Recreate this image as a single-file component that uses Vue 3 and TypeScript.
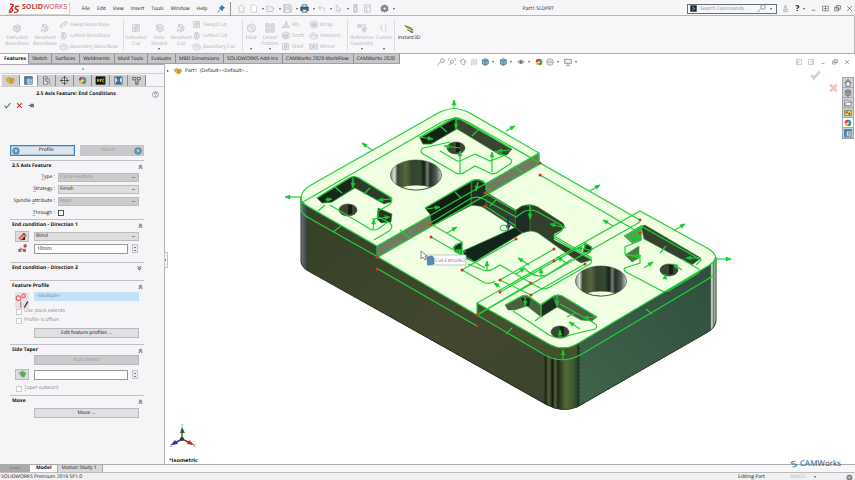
<script setup lang="ts">
import { h, ref } from 'vue'

type Shape = [d: string, fill?: string, stroke?: string]

const G = '#c3c5c9'
const shapes: Record<string, Shape[]> = {
  boss: [['M2 4L7 2L10 4V9L6 11L2 9Z', '#e3e4e7', G], ['M2 4L6 6L10 4M6 6V11', 'none', G]],
  revolve: [['M3 2C8 1 11 5 9 9L6 11L4 9C7 7 6 5 3 5Z', '#e0e1e4', G], ['M2 7V11M1 9H4', 'none', G]],
  sweep: [['M2 10C1 5 4 6 6 4S9 1 11 3S8 6 7 8', '#e3e4e7', G], ['M1 8L5 11', 'none', G]],
  loft: [['M3 10L4 2H8L10 7L7 11Z', '#e3e4e7', G], ['M5 2L7 11', 'none', G]],
  bound: [['M1 5L5 2L11 5V9L6 11L2 9Z', '#eeeff1', G], ['M3 6C6 4 8 8 10 6', 'none', G]],
  cut: [['M2 2H10V10H2Z', '#eff0f2', G], ['M4 5L8 3V7L5 9Z', '#d5d6da', G]],
  hole: [['M3 3L7 1L11 4V9L7 11L3 8Z', '#e6e7ea', G], ['M2 2L7 8M5 4A2 2 0 1 0 9 5', 'none', G]],
  fillet: [['M2 3L6 1L11 3V9L6 11L2 9Z', '#ececef', G], ['M3 4C7 3 8 5 8 9', 'none', G]],
  pattern: [['M1 1H5V5H1ZM7 1H11V5H7ZM1 7H5V11H1ZM7 7H11V11H7Z', '#e0e1e4', G]],
  rib: [['M1 10H11L7 2L5 6Z', '#dcdde0', G]],
  wrap: [['M2 3C5 1 9 1 11 3V9C8 11 4 11 2 9Z', '#e8e9ec', G], ['M4 5H9V8H4Z', '#d2d3d7', G]],
  mirror: [['M1 2L5 4V8L1 10ZM11 2L7 4V8L11 10Z', '#e3e4e7', G], ['M6 1V11', 'none', G]],
  refgeo: [['M1 2H5V5H1ZM6 7L11 5V9L8 11Z', '#dcdde0', G], ['M5 3L10 2L8 7', 'none', G]],
  curves: [['M2 2C4 3 1 8 4 10M9 1C6 4 11 7 7 10', 'none', G]],
  instant: [['M1 3L9 6L11 9L3 5Z', '#d8cc28', '#6e6b22'], ['M4 8L10 11M8 11H11', 'none', '#333']],
  home: [['M1 6L6 1L11 6M3 5V11H9V5', 'none', '#b9bcc1']],
  page: [['M3 1H7L10 4V11H3Z', '#fff', '#c2c5ca']],
  open: [['M1 3H5L6 4H9V6H11L9 10H1Z', '#eee', '#b9bcc1']],
  save: [['M1 1H10L11 2V11H1Z', '#dfe0e4', '#b9bcc1'], ['M3 1H8V4H3ZM3 7H9V11H3Z', '#fafafa', '#b9bcc1']],
  print: [['M3 1H9V5H3Z', '#fff', '#34566a'], ['M1 4H11V9H1Z', '#3c6b86', '#28495c'], ['M3 7H9V11H3Z', '#dfeaf1', '#34566a']],
  undo: [['M2 5H8C11 5 11 10 8 10M5 2L2 5L5 8', 'none', '#babdc3']],
  select: [['M3 1V10L5 8L7 11L8 10L7 7H9Z', '#f6f6f6', '#babdc3']],
  traffic: [['M4 1H8V11H4Z', '#d0d2d6', '#aaadb2'], ['M5 3H7M5 6H7M5 9H7', 'none', '#fff']],
  sheet: [['M2 1H10V11H2ZM2 4H10M5 4V11', '#f2f2f2', '#c0c3c8']],
  gear: [['M6 1L7 3L9 2L9 4L11 5L10 6L11 8L9 8L9 10L7 9L6 11L5 9L3 10L3 8L1 8L2 6L1 5L3 4L3 2L5 3Z', '#a5a8ad', '#55585d'], ['M6 4A2 2 0 1 0 6 8A2 2 0 1 0 6 4', '#fff', '#55585d']],
  pin: [['M6 2L10 5L8 6L7 9L3 5L5 5ZM4 7L1 11', '#2c86bb', '#1d6c9b']],
  searchbox: [['M1 1H11V11H1Z', '#1d2b36', '#1d2b36'], ['M4 3L8 6L4 9', 'none', '#fff']],
  lens: [['M8 1A3 3 0 1 0 8 7A3 3 0 1 0 8 1M5 6L1 11', '#f6fafc', '#6b8493']],
  lensfit: [['M3 1H1V4M9 1H11V4M11 9V11', 'none', '#8a9299'], ['M6 3A2.5 2.5 0 1 0 6 8A2.5 2.5 0 1 0 6 3M4 8L2 11', '#eef4f7', '#6b8493']],
  prev: [['M8 2A4 4 0 1 0 9 9M2 5L5 2M8 4H11M8 4V7H11', 'none', '#6b8493']],
  section: [['M2 3L5 1V9L2 11ZM7 3L10 1V9L7 11Z', '#eceef0', '#c2c6ca']],
  cube: [['M2 3L6 1L11 3V9L6 11L2 9Z', '#83b2cf', '#416b87'], ['M2 3L6 5L11 3M6 5V11', 'none', '#416b87']],
  eye: [['M1 6C4 2 8 2 11 6C8 9 4 9 1 6Z', '#eef1f3', '#7d858c'], ['M6 4A2 2 0 1 0 6 8A2 2 0 1 0 6 4', '#718593', '#5a6770']],
  ball: [['M6 1A5 5 0 0 0 1 6H6Z', '#d8392f'], ['M6 1A5 5 0 0 1 11 6H6Z', '#3a8dc4'], ['M1 6A5 5 0 0 0 6 11V6Z', '#f1b82d'], ['M11 6A5 5 0 0 1 6 11V6Z', '#3f9945'], ['M6 4A2 2 0 1 0 6 8A2 2 0 1 0 6 4', '#fff8']],
  scene: [['M6 1A5 5 0 1 0 6 11A5 5 0 1 0 6 1', '#dfe7ec', '#8b949b'], ['M1 7C4 5 8 5 11 7', 'none', '#8b949b']],
  monitor: [['M1 2H11V8H1Z', '#eef3f6', '#5b7484'], ['M6 8V10M3 11H9', 'none', '#5b7484']],
  part: [['M1 4L4 2L7 4L10 3L11 7L8 10L4 9L1 6Z', '#efbd3d', '#ae7a18'], ['M4 5L7 6L8 9M7 4V6', 'none', '#8f671b']],
  prop: [['M1 1H11V11H1Z', '#e9f3f9', '#376f91'], ['M1 1H11V3H1ZM1 3H4V11H1Z', '#5d9bc1', '#376f91'], ['M6 5H10M6 7H10M6 9H10', 'none', '#376f91']],
  config: [['M2 1H7V11H2ZM3 3H6M3 5H6M3 7H6', '#f3f3f3', '#666'], ['M6 5A2 2 0 1 0 10 6A2 2 0 1 0 6 5M9 8L11 11', '#ddd', '#666']],
  target: [['M6 2A4 4 0 1 0 6 10A4 4 0 1 0 6 2', '#f2f2f2', '#333'], ['M6 0V12M0 6H12', 'none', '#333']],
  npc: [['M0 1H12V11H0Z', '#15150f', '#15150f'], ['M2 8V4L4 7V4M6 8V4H7V6H6M11 4H9V8H11', 'none', '#d9cf35']],
  camtree: [['M1 1H11V11H1Z', '#dfe9f1', '#375c7b'], ['M3 2H9L7 5V8H9V10H3V8H5V5Z', '#4e7899', '#2d4e69']],
  camtool: [['M1 2H5V5H1ZM7 2H11V5H7Z', '#e8e2cb', '#444'], ['M3 5L5 7V11H8V7L9 5', '#b6babd', '#444']],
  help: [['M6 1A5 5 0 1 0 6 11A5 5 0 1 0 6 1', '#f4f8fb', '#4b7086'], ['M4 5C4 2 8 3 8 5C8 6 6 6 6 8M6 9V10', 'none', '#335a72']],
  check: [['M1 6L4 10L11 2', 'none', '#3c9a28']],
  cross: [['M2 2L10 10M10 2L2 10', 'none', '#d0392c']],
  pushpin: [['M1 6H5M5 3V9M5 4H9V8H5M9 3V9', '#999', '#666']],
  blue: [['M6 1A5 5 0 1 0 6 11A5 5 0 1 0 6 1', '#6ea5cc', '#36688b'], ['M4 3H8V8H4Z', '#c7dfee', '#4b80a5']],
  reverse: [['M1 8L8 2L11 5L4 11Z', '#ee8d86', '#b7332b'], ['M4 6L9 2M9 2H6M9 2V5', 'none', '#c92d25'], ['M6 10H9V7Z', '#111', '#111']],
  depth: [['M2 9L5 6M8 5L10 2M3 5L9 9', 'none', '#9c5a5a'], ['M1 7H4V10H1ZM8 1H11V4H8ZM7 7H10V10H7Z', '#d66', '#a54444']],
  profile: [['M1 4A2 2 0 1 0 5 4A2 2 0 1 0 1 4M6 2A1.5 1.5 0 1 0 9 2A1.5 1.5 0 1 0 6 2', '#fbe6e8', '#e0626a'], ['M5 7V12', 'none', '#e0626a'], ['M8 12L11 7', 'none', '#222']],
  taper: [['M1 4L6 1L11 4L8 10L5 9Z', '#68b45c', '#8bbd80'], ['M6 2V8L10 4', 'none', '#469c3f']],
  person: [['M6 1A2 2 0 1 0 6 5A2 2 0 1 0 6 1M3 11V7H9V11Z', '#eee', '#8b8e92']],
  min: [['M3 9H9', 'none', '#333']],
  split: [['M1 2H11V10H1ZM6 2V10M3 6H9', 'none', '#555']],
  restore: [['M4 1H11V7H4ZM1 4H8V10H1Z', '#f6f6f8', '#444']],
  close: [['M2 2L10 10M10 2L2 10', 'none', '#333']],
  paneL: [['M1 1H11V11H1ZM3 1V11M7 4L5 6L7 8', 'none', '#8a8d91']],
  paneR: [['M1 1H11V11H1ZM9 1V11M5 4L7 6L5 8', 'none', '#8a8d91']],
  house: [['M1 6L6 1L11 6', 'none', '#222'], ['M3 6V11H9V6L6 3Z', '#e9f0f4', '#345b73']],
  library: [['M2 3L6 1L10 3V9L6 11L2 9Z', '#aeb2b6', '#555'], ['M2 3L6 5L10 3M6 5V11', 'none', '#555']],
  folder: [['M1 2H5L6 3H10V10H1Z', '#fff', '#666'], ['M1 10L3 5H12L10 10Z', '#f5f5f5', '#666']],
  palette: [['M1 2H11V10H1Z', '#e3d060', '#776b22'], ['M3 4H5V6H3ZM7 6H9V8H7Z', '#8e7d22', '#776b22']],
  camlogo: [['M10 2C6 0 1 2 1 5C4 7 7 4 11 6C9 4 5 4 3 5C4 3 7 2 10 2Z', '#6f7b85'], ['M2 10C6 12 11 10 11 7C8 5 5 8 1 6C3 8 7 8 9 7C8 9 5 10 2 10Z', '#3d83b8']],
}

const Icon = (p: { name: string }) =>
  h('svg', { viewBox: '0 0 12 12', 'aria-hidden': 'true' },
    (shapes[p.name] ?? []).map(([d, fill, stroke]) => h('path', { d, fill: fill ?? 'none', stroke: stroke ?? 'none' })))
Icon.props = ['name']

const menus = ['File', 'Edit', 'View', 'Insert', 'Tools', 'Window', 'Help']
const quick = [
  { i: 'home', drop: false }, { i: 'page', drop: true }, { i: 'open', drop: true }, { i: 'save', drop: true },
  { i: 'print', drop: true }, { i: 'undo', drop: true }, { i: 'select', drop: true }, { i: 'traffic', drop: false },
  { i: 'sheet', drop: false }, { i: 'gear', drop: true },
]

interface Big { icon: string; a: string; b?: string; drop?: boolean; size: string }
interface List { size: string; rows: [string, string][] }
interface Group { big: Big[]; lists: List[] }
const ribbon: Group[] = [
  { big: [{ icon: 'boss', a: 'Extruded', b: 'Boss/Base', size: 'w28' }, { icon: 'revolve', a: 'Revolved', b: 'Boss/Base', size: 'w28' }],
    lists: [{ size: 'l62', rows: [['sweep', 'Swept Boss/Base'], ['loft', 'Lofted Boss/Base'], ['bound', 'Boundary Boss/Base']] }] },
  { big: [{ icon: 'cut', a: 'Extruded', b: 'Cut', size: 'w24' }, { icon: 'hole', a: 'Hole', b: 'Wizard', drop: true, size: 'w22' }, { icon: 'revolve', a: 'Revolved', b: 'Cut', size: 'w22' }],
    lists: [{ size: 'l48', rows: [['cut', 'Swept Cut'], ['loft', 'Lofted Cut'], ['bound', 'Boundary Cut']] }] },
  { big: [{ icon: 'fillet', a: 'Fillet', drop: true, size: 'w16' }, { icon: 'pattern', a: 'Linear', b: 'Pattern', drop: true, size: 'w22' }],
    lists: [{ size: 'l28', rows: [['rib', 'Rib'], ['wrap', 'Draft'], ['cut', 'Shell']] }, { size: 'l36', rows: [['wrap', 'Wrap'], ['bound', 'Intersect'], ['mirror', 'Mirror']] }] },
  { big: [{ icon: 'refgeo', a: 'Reference', b: 'Geometry', drop: true, size: 'w28' }, { icon: 'curves', a: 'Curves', drop: true, size: 'w16' }], lists: [] },
]
const tabs = ['Features', 'Sketch', 'Surfaces', 'Weldments', 'Mold Tools', 'Evaluate', 'MBD Dimensions', 'SOLIDWORKS Add-Ins', 'CAMWorks 2020-WorkFlow', 'CAMWorks 2020']
const panelTabs = ['part', 'prop', 'config', 'target', 'ball', 'npc', 'camtree', 'camtool']
const hud = [
  { i: 'lens', drop: false }, { i: 'lensfit', drop: false }, { i: 'prev', drop: false }, { i: 'section', drop: false },
  { i: 'cube', drop: true }, { i: 'cube', drop: true }, { i: 'eye', drop: true }, { i: 'ball', drop: false }, { i: 'scene', drop: true }, { i: 'monitor', drop: true },
]
const taskPane = ['house', 'library', 'folder', 'palette', 'ball', 'prop']

const active = ref('Features')
const depthValue = ref('10mm')

// Open contour end points
const dots: [number, number][] = [
  [540, 163], [540, 175], [485, 193], [485, 206], [431, 224], [431, 237], [377, 257], [377, 269], [477, 315], [477, 326],
  [462, 270], [500, 280], [500, 292], [531, 283], [531, 295], [516, 239], [554, 249], [554, 261], [585, 264], [640, 220], [640, 233],
]
// Side-of-contour markers: tail then head
const arrows: [number, number, number, number][] = [
  [301, 197, 285, 197], [454, 108, 454, 100], [372, 150, 362, 143], [506, 131, 515, 126], [590, 191, 600, 185], [675, 230, 685, 224],
  [716, 259, 731, 259], [613, 226, 603, 220], [447, 233, 457, 227], [566, 228, 550, 224], [460, 148, 444, 146], [418, 137, 433, 139],
  [460, 173, 460, 151], [492, 172, 492, 152], [510, 150, 497, 151], [456, 118, 456, 129], [478, 182, 476, 191], [426, 209, 440, 207],
  [530, 204, 530, 219], [487, 271, 487, 261], [541, 277, 541, 268], [529, 265, 518, 258], [500, 287, 494, 283], [568, 264, 557, 257],
  [516, 274, 525, 268], [325, 200, 332, 199], [353, 178, 353, 188], [373, 230, 374, 219], [372, 219, 390, 217], [392, 199, 378, 200],
  [466, 252, 456, 250], [525, 297, 525, 306], [557, 296, 557, 306], [580, 329, 569, 322], [596, 317, 583, 318], [560, 338, 560, 330],
  [563, 360, 563, 350], [644, 268, 653, 262], [682, 270, 673, 264], [665, 279, 665, 274], [700, 258, 686, 258], [641, 236, 632, 239],
  [626, 255, 641, 256], [590, 250, 577, 248],
]
const head = ([x1, y1, x2, y2]: [number, number, number, number]) => {
  const len = Math.hypot(x2 - x1, y2 - y1) || 1
  const ux = (x2 - x1) / len
  const uy = (y2 - y1) / len
  const bx = x2 - ux * 5
  const by = y2 - uy * 5
  return `M${x2} ${y2}L${bx - uy * 2} ${by + ux * 2}L${bx + uy * 2} ${by - ux * 2}Z`
}
</script>

<template>
  <div class="app">
    <header class="titlebar">
      <a class="brand" href="#" aria-label="SOLIDWORKS">
        <svg class="ds" viewBox="0 0 12 10" aria-hidden="true">
          <path d="M2 1C6 0 6 3 3 4M1 9C5 9 6 5 3 5L1 9M11 3C7 2 6 5 9 6C11 7 10 9 6 9" />
        </svg>
        <b>SOLID</b><span>WORKS</span>
      </a>
      <nav class="menus"><a v-for="m in menus" :key="m" href="#">{{ m }}</a></nav>
      <button class="ic pinbtn" aria-label="Pin menu"><Icon name="pin" /></button>
      <div class="quick">
        <button v-for="(q, n) in quick" :key="n" class="ic" :class="{ drop: q.drop }" :aria-label="q.i"><Icon :name="q.i" /></button>
      </div>
      <div class="doc">Part1.SLDPRT</div>
      <div class="search">
        <Icon name="searchbox" />
        <input type="text" placeholder="Search Commands" aria-label="Search Commands" />
        <button class="ic drop" aria-label="Search"><Icon name="lens" /></button>
      </div>
      <div class="win">
        <button class="ic" aria-label="Account"><Icon name="person" /></button>
        <button class="ic drop qm" aria-label="Help">?</button>
        <button class="ic" aria-label="Minimize"><Icon name="min" /></button>
        <button class="ic" aria-label="Span displays"><Icon name="split" /></button>
        <button class="ic" aria-label="Restore"><Icon name="restore" /></button>
        <button class="ic" aria-label="Close"><Icon name="close" /></button>
      </div>
    </header>

    <section class="ribbon">
      <div v-for="(g, gi) in ribbon" :key="gi" class="group">
        <button v-for="b in g.big" :key="b.a" class="big" :class="b.size">
          <Icon :name="b.icon" /><span>{{ b.a }}</span><span v-if="b.b">{{ b.b }}</span><i v-if="b.drop" class="caret"></i>
        </button>
        <div v-for="l in g.lists" :key="l.rows[0][1]" class="list" :class="l.size">
          <button v-for="r in l.rows" :key="r[1]"><Icon :name="r[0]" />{{ r[1] }}</button>
        </div>
      </div>
      <button class="big live w28"><Icon name="instant" /><span>Instant3D</span></button>
    </section>

    <nav class="tabs">
      <button v-for="t in tabs" :key="t" :class="{ on: t === active }" @click="active = t">{{ t }}</button>
    </nav>

    <main class="work">
      <aside class="panel">
        <div class="grip"></div>
        <div class="ptabs">
          <button v-for="(p, n) in panelTabs" :key="p" :class="{ on: n === 1 }" :aria-label="p"><Icon :name="p" /></button>
        </div>
        <div class="ptitle"><h1>2.5 Axis Feature: End Conditions</h1><button class="ic" aria-label="Help"><Icon name="help" /></button></div>
        <div class="confirm">
          <button class="ic" aria-label="OK"><Icon name="check" /></button>
          <button class="ic" aria-label="Cancel"><Icon name="cross" /></button>
          <button class="ic" aria-label="Keep visible"><Icon name="pushpin" /></button>
        </div>
        <div class="body">
          <div class="modes">
            <button class="mode on"><Icon name="blue" /><span>Profile</span></button>
            <button class="mode end" disabled><span>Island</span><Icon name="blue" /></button>
          </div>

          <section class="sec feature">
            <h2>2.5 Axis Feature<i class="chev"></i></h2>
            <div class="field"><label for="type"><u>T</u>ype :</label><select id="type" disabled><option>Curve Feature</option></select></div>
            <div class="field"><label for="strategy"><u>S</u>trategy :</label><select id="strategy"><option>Finish</option></select></div>
            <div class="field"><label for="spindle">Spindle <u>a</u>ttribute :</label><select id="spindle" disabled><option>Main</option></select></div>
            <div class="field"><label for="through"><u>T</u>hrough :</label><input id="through" type="checkbox" /></div>
          </section>

          <section class="sec dir1">
            <h2>End condition - Direction 1<i class="chev"></i></h2>
            <div class="row"><button class="tool" aria-label="Reverse direction"><Icon name="reverse" /></button><select aria-label="End condition"><option>Blind</option></select></div>
            <div class="row"><span class="tool flat"><Icon name="depth" /></span><input v-model="depthValue" type="text" aria-label="Depth" /><span class="spin"></span></div>
          </section>

          <section class="sec dir2"><h2>End condition - Direction 2<i class="chev down"></i></h2></section>

          <section class="sec prof">
            <h2>Feature Profile<i class="chev"></i></h2>
            <div class="row top"><span class="tool tall"><Icon name="profile" /></span><div class="picked">&lt;Multiple&gt;</div></div>
            <label class="tick"><input type="checkbox" disabled /><span>Use <u>s</u>tock extents</span></label>
            <label class="tick"><input type="checkbox" disabled /><span>Prof<u>i</u>le is offset</span></label>
            <button class="wide">Edit feature profiles ...</button>
          </section>

          <section class="sec taper">
            <h2>Side Taper<i class="chev"></i></h2>
            <button class="wide" disabled>Auto detect</button>
            <div class="row"><button class="tool" aria-label="Taper"><Icon name="taper" /></button><input type="text" aria-label="Taper angle" /><span class="spin"></span></div>
            <label class="tick"><input type="checkbox" disabled /><span><u>T</u>aper outward</span></label>
          </section>

          <section class="sec move">
            <h2>Move<i class="chev"></i></h2>
            <button class="wide">Move ...</button>
          </section>
        </div>
        <button class="handle" aria-label="Collapse panel"></button>
      </aside>

      <section class="view">
        <svg class="model" viewBox="165 64 690 400" preserveAspectRatio="xMidYMid meet" role="img" aria-label="Isometric view of the part">
          <defs>
            <linearGradient id="front" x1="0" y1="0" x2="1" y2="1"><stop offset="0" stop-color="#344027" /><stop offset=".6" stop-color="#42472f" /><stop offset="1" stop-color="#3b432e" /></linearGradient>
            <linearGradient id="side" x1="0" y1="1" x2="1" y2="0"><stop offset="0" stop-color="#406449" /><stop offset="1" stop-color="#304d3d" /></linearGradient>
            <linearGradient id="bore"><stop offset="0" stop-color="#8a9190" /><stop offset=".08" stop-color="#d8dedb" /><stop offset=".14" stop-color="#3a4632" /><stop offset=".3" stop-color="#56693b" /><stop offset=".42" stop-color="#33422b" /><stop offset=".58" stop-color="#344b35" /><stop offset=".66" stop-color="#121c16" /><stop offset=".72" stop-color="#71806f" /><stop offset=".78" stop-color="#222e27" /><stop offset=".9" stop-color="#56605a" /><stop offset="1" stop-color="#cfd6d0" /></linearGradient>
            <linearGradient id="nose"><stop offset="0" stop-color="#182114" /><stop offset=".12" stop-color="#59603c" /><stop offset=".22" stop-color="#11180f" /><stop offset=".3" stop-color="#53623a" /><stop offset=".38" stop-color="#20281a" /><stop offset=".6" stop-color="#536b34" /><stop offset=".85" stop-color="#3d5532" /><stop offset="1" stop-color="#1d3826" /></linearGradient>
            <linearGradient id="edgeL"><stop offset="0" stop-color="#777d88" /><stop offset=".4" stop-color="#505963" /><stop offset="1" stop-color="#303c2a" /></linearGradient>
            <linearGradient id="edgeR"><stop offset="0" stop-color="#1c2c22" /><stop offset=".3" stop-color="#d8e6d5" /><stop offset=".6" stop-color="#637a61" /><stop offset="1" stop-color="#e8f2e4" /></linearGradient>
          </defs>

          <path fill="url(#front)" d="M301 197V262Q302 268 310 272L548 406L552 350L378 245Z" />
          <path fill="url(#edgeL)" d="M301 197V262Q302 267 308 271V205Z" />
          <path fill="url(#side)" d="M575 340L576 408L708 332Q716 327 716 320V257Z" />
          <path fill="url(#edgeR)" d="M710 264V331Q716 327 716 320V257Z" />
          <path fill="url(#nose)" d="M545 342V404Q561 414 579 406V342Z" />
          <path class="rim" d="M301 197V262Q302 268 310 272L548 405Q562 413 577 407L708 332Q716 327 716 320V257" />
          <path class="rim dash" d="M545 349V404M579 347V406" />

          <path class="face" d="M378 257L540 163L640 220L650 245L477 315Z" />
          <path class="face" d="M301 197Q302 190 311 185L440 112Q454 105 468 112L539 153L377 246L309 207Q301 203 301 197Z" />
          <path fill="#707b60" d="M377 246L539 153L540 164L378 257Z" />
          <path class="face" d="M477 303L640 211L707 248Q722 257 708 266L577 344Q563 351 549 344Z" />
          <path fill="#45502f" d="M477 303L549 344Q563 352 577 344V358Q562 362 547 355L477 315Z" />

          <g stroke="#35a33b" stroke-width=".6">
            <path fill="#2d3b28" d="M317 198L349 178Q354 175 359 178L392 198L391 202L384 204L355 188L332 202L322 203Z" />
            <path fill="#172719" d="M317 198L352 177V189L332 202L322 203Z" />
            <path fill="#26351f" d="M378 208L392 214L391 222L381 223L377 219Z" />
            <path fill="#3b4430" d="M420 138L451 120Q456 116 461 120L512 149L507 155H500L457 129L431 144H423Z" />
            <path fill="#142218" d="M420 138L456 118V129L431 144H423Z" />
            <path fill="#333f2c" d="M425 208L472 181Q480 177 486 184V192L516 210L522 206Q530 203 538 207L563 223Q567 228 560 231L554 234V240L592 260L581 263L573 258L538 233Q530 229 522 233L474 262L465 258L463 251L515 228L484 208Q477 203 470 206L432 226L430 214Z" />
            <path fill="#111e16" d="M425 208L471 182V205L432 226L430 214Z" />
            <path fill="#15241a" d="M463 251L516 227L522 233L474 262L465 258Z" />
            <path fill="#212c24" d="M472 181Q480 177 486 184V207L471 205ZM516 210L522 206H530V231L522 233L515 227Z" />
            <path fill="#1c301d" d="M453 247L462 242V255L455 252Z" />
            <path fill="#27351f" d="M585 243L592 247L590 253L583 252Z" />
            <path fill="#4e5e42" d="M505 305L522 296Q527 294 531 298L541 305L552 297Q558 293 564 297L597 317L592 321L581 320L557 307L541 317L527 306L515 310H508Z" />
            <path fill="#1d2c1c" d="M541 304L553 297L557 307L541 317ZM520 297L531 298L530 307L523 305Z" />
            <path fill="#34412d" d="M641 226L645 225L701 258L692 265L644 239Z" />
            <path fill="#4ea651" d="M624 236L641 226V240L632 243Z" />
            <path fill="#4a7a42" d="M625 255L639 246V258L632 262Z" />
          </g>

          <g stroke="#303a2e" stroke-width=".6">
            <ellipse cx="416" cy="175" rx="25.500" ry="15" fill="url(#bore)" />
            <path d="M401 187Q416 193 431 187Q416 183 401 187Z" class="face" />
            <ellipse cx="601" cy="281" rx="25.500" ry="15" fill="url(#bore)" />
            <path d="M586 293Q601 299 616 293Q601 289 586 293Z" class="face" />
            <ellipse v-for="c in [[456, 148], [348, 210], [669, 270], [560, 332]]" :key="c[0]" :cx="c[0]" :cy="c[1]" rx="9" ry="6" fill="#3a4632" />
            <path v-for="c in [[456, 148], [348, 210], [669, 270], [560, 332]]" :key="c[1]" :d="`M${c[0]} ${c[1] - 5}H${c[0] + 4}V${c[1] + 4}H${c[0]}Z`" fill="#141d13" stroke="none" />
          </g>

          <g class="wire">
            <path d="M301 197Q302 190 311 185L440 112Q454 105 468 112L539 153V164" />
            <path d="M539 153L377 246L309 207Q301 203 301 197V210Q302 214 309 218L378 257L540 164" />
            <path d="M303 202L440 123Q454 115 468 122L640 220M540 175L640 233" />
            <path d="M378 257L477 315M378 269L477 326M377 246V257" />
            <path d="M477 315V303L640 211L707 248Q716 253 716 259L716 270Q716 274 708 279L582 354Q563 365 545 355L477 315L640 222" />
            <path d="M477 303L549 344Q563 352 577 344L708 266Q716 261 716 257" />
            <path d="M317 198L349 178Q354 175 359 178L390 197Q394 201 389 205L378 211V217L390 223Q394 227 389 231L374 240M330 205L370 229Q374 231 378 229L388 222" />
            <path d="M333 232L341 226M410 238L400 230M335 187L342 193M370 188L364 194M318 211L325 205" />
            <path d="M420 137L451 119Q456 116 461 119L510 148M450 142L423 148Q419 151 423 154L456 173Q461 175 465 172L475 166L490 173Q494 175 498 172L510 164Q514 161 509 158L495 151M475 154L460 161H457L440 151M475 154L490 161L505 155" />
            <path d="M440 126L447 132M479 129L472 136M522 172L514 166M455 192L461 198M496 200L490 206" />
            <path d="M425 208L471 181Q478 177 486 184V190M429 224L468 200Q477 194 487 201L516 217L523 212Q530 208 538 212L561 225Q565 229 560 232L554 236L592 258" />
            <path d="M431 224L462 242V252Q455 254 454 248Q454 244 460 243M431 237L485 268M462 270L483 282Q489 285 495 281" />
            <path d="M468 264L483 270Q489 272 495 268L500 265L531 283L540 288Q545 290 550 287L590 264Q594 261 589 258L554 238M500 292L585 244" />
            <path d="M462 270L516 239M500 280L554 249M500 280L531 295M531 283L477 315M531 295L585 264M485 193L516 211M485 206L516 226" />
            <path d="M524 268Q532 276 540 276L547 275L572 259M585 255L590 252Q594 248 590 246L585 243V249M506 334L512 328M652 314L646 309" />
            <path d="M513 311L549 335Q560 341 570 335L595 329Q599 326 594 323L560 304M505 305L522 296Q527 294 531 298L541 305V316L535 321M541 305L552 297Q558 293 564 297L597 317M575 313L567 317" />
            <path d="M641 226L701 260L696 265M625 236L641 226V240L625 247V254L640 258V263L625 268Q623 270 626 272L660 290Q665 293 670 290L697 274Q702 271 697 268L682 259M666 246L660 253" />
            <path v-for="(a, n) in arrows" :key="n" :d="`M${a[0]} ${a[1]}L${a[2]} ${a[3]}`" />
          </g>
          <path v-for="(a, n) in arrows" :key="n" class="tip" :d="head(a)" />
          <circle v-for="(d, n) in dots" :key="n" :cx="d[0]" :cy="d[1]" r="1.500" fill="#d8321c" />

          <path d="M508 216V228M506 225L508 229L510 225" stroke="#122a8e" stroke-width="1.500" fill="none" />
          <ellipse cx="504" cy="228" rx="4" ry="3" fill="none" stroke="#29c840" />

          <path d="M421 251V259L423 257L425 260L426 259L425 256H427Z" fill="#fff" stroke="#555" stroke-width=".7" />
          <path d="M427 255H466V265H427Z" fill="#fff" stroke="#a5a9ad" stroke-width=".7" />
          <path d="M427 257L432 256L434 258V264L428 265Z" fill="#4f8fb8" stroke="#32658a" stroke-width=".6" />
          <text x="435" y="262" class="tiptext">Cut-Extrude2</text>

          <g fill="none" stroke-width="1.500">
            <path stroke="#2d7b3a" d="M182 439V429" /><path stroke="#a92d25" d="M182 439L192 444" /><path stroke="#24359c" d="M182 439L173 444" />
          </g>
          <path fill="#23682f" d="M180 433L182 427L185 433Z" /><path fill="#a92d25" d="M194 445L187 444L189 440Z" /><path fill="#24359c" d="M171 445L175 440L178 444Z" />
          <circle cx="182" cy="439" r="2" fill="#30343c" />
          <text x="181" y="427" class="ax" fill="#2d9b3a">Y</text><text x="193" y="447" class="ax" fill="#c4392e">X</text><text x="170" y="447" class="ax" fill="#3344c0">Z</text>
          <text x="169" y="462" class="iso">*Isometric</text>
        </svg>

        <div class="tree"><i class="tri"></i><Icon name="part" /><span>Part1&nbsp; (Default&lt;&lt;Default&gt;...</span></div>
        <div class="hud"><button v-for="(x, n) in hud" :key="n" class="ic" :class="{ drop: x.drop }" :aria-label="x.i"><Icon :name="x.i" /></button></div>
        <div class="docwin">
          <button v-for="w in ['paneL', 'paneR', 'min', 'restore', 'close']" :key="w" class="ic" :aria-label="w"><Icon :name="w" /></button>
        </div>
        <button class="corner yes" aria-label="Accept"><Icon name="check" /></button>
        <button class="corner no" aria-label="Discard"><Icon name="cross" /></button>
        <div class="task"><button v-for="(t, n) in taskPane" :key="t" :class="{ on: n === 4 }" :aria-label="t"><Icon :name="t" /></button></div>
        <div class="cam"><Icon name="camlogo" /><span><b>CAM</b>Works</span></div>
      </section>
    </main>

    <footer>
      <nav class="sheets"><span class="nav">◂ ◂ ▸ ▸</span><button class="on">Model</button><button>Motion Study 1</button></nav>
      <div class="status"><span class="ver">SOLIDWORKS Premium 2019 SP1.0</span><span class="edit">Editing Part</span><span class="unit">MMGS</span><i class="caret"></i><Icon name="gear" /></div>
    </footer>
  </div>
</template>

<style>
body { margin: 0; background: #fff; }
</style>

<style scoped>
.app { min-height: 100vh; display: grid; grid-template-rows: 16px 38px 10px 1fr auto; font: 5px/8px "Open Sans", "Noto Sans", sans-serif; text-rendering: geometricPrecision; color: #111; background: #fff; }
* { box-sizing: border-box; }
button, input, select { font: inherit; color: inherit; text-rendering: inherit; margin: 0; padding: 0; border: 0; background: none; border-radius: 0; appearance: none; }
a { color: inherit; text-decoration: none; }
u { text-decoration-color: #b4b4b8; }
svg { display: block; overflow: visible; flex: none; }
.ic { width: 9px; height: 9px; flex: none; display: flex; align-items: center; justify-content: center; }
.ic svg { width: 9px; height: 9px; }
.drop { position: relative; }
.drop::after, .caret { content: ""; border: 1px solid transparent; border-top: 2px solid #555; width: 0; height: 0; }
.drop::after { position: absolute; right: -6px; top: 4px; }

.titlebar { display: flex; align-items: center; background: #f6f6f8; border-bottom: 1px solid #b5b6ba; padding: 2px 1px 0 6px; }
.brand { display: flex; align-items: center; width: 64px; height: 13px; padding-left: 2px; background: #fff; border-right: 1px solid #d5d5d8; border-bottom: 1px solid #d5d5d8; color: #c9362e; font-size: 7px; flex: none; }
.ds { width: 12px; height: 11px; margin-right: 2px; }
.ds path { fill: none; stroke: #cc2b25; stroke-width: 1.500; }
.menus { display: flex; gap: 7px; padding-left: 12px; flex: none; line-height: 10px; }
.pinbtn { margin: 0 4px 0 10px; }
.quick { display: flex; gap: 8px; padding-left: 6px; border-left: 1px solid #999; height: 14px; align-items: center; }
.quick .ic:first-child { margin-right: -5px; }
.quick .ic:nth-child(8) { margin-right: -5px; }
.doc { flex: 1; text-align: center; line-height: 10px; }
.search { display: flex; align-items: center; width: 90px; height: 10px; border: 1px solid #66707c; background: #f4f6fa; padding: 0 10px 0 2px; gap: 3px; color: #777; }
.search > svg { width: 7px; height: 7px; }
.search input { flex: 1; min-width: 0; height: 8px; }
.search input::placeholder { color: #888; opacity: 1; }
.win { display: flex; gap: 3px; padding-left: 4px; align-items: center; }
.win .ic svg { width: 7px; height: 7px; }
.qm { font-weight: 700; font-size: 8px; margin-right: 4px; }
.qm.drop::after { right: -3px; }

.ribbon { display: flex; background: #f7f6f8; border-bottom: 1px solid #aaa; border-right: 1px solid #bbb; padding: 3px 0 2px 3px; color: #b2b3b8; line-height: 6px; }
.group { display: flex; border-right: 1px solid #dcdce0; padding-right: 2px; }
.big { display: flex; flex-direction: column; align-items: center; padding-top: 4px; position: relative; }
.big svg { width: 10px; height: 10px; margin-bottom: 2px; }
.big .caret { position: absolute; bottom: 0; }
.live { color: #222; }
.list { display: grid; grid-template-rows: repeat(3, 11px); }
.list button { display: flex; align-items: center; gap: 2px; white-space: nowrap; }
.list svg { width: 9px; height: 9px; }
.w16 { width: 16px; } .w22 { width: 22px; } .w24 { width: 24px; } .w28 { width: 28px; }
.l62 { width: 62px; } .l48 { width: 48px; } .l28 { width: 28px; } .l36 { width: 36px; }

.tabs { display: flex; height: 10px; }
.tabs button { padding: 1px 4px 0 3px; background: #c6c6c9; border-right: 1px solid #909094; border-bottom: 1px solid #a2a2a6; white-space: nowrap; line-height: 8px; }
.tabs .on { background: #fff; font-weight: 700; border-bottom-color: #fff; padding-right: 2px; padding-left: 4px; }

.work { display: grid; grid-template-columns: 165px 1fr; min-height: 0; }
.panel { position: relative; background: #f5f5f8; border-right: 1px solid #b3b3b7; border-top: 1px solid #aaaaae; padding-left: 1px; line-height: 7px; }
.grip { height: 9px; border-bottom: 1px solid #c9d3dc; display: flex; align-items: center; justify-content: center; }
.grip::before { content: ""; width: 2px; height: 2px; background: #9bb0c0; }
.ptabs { display: flex; padding: 1px 0 0 1px; border-bottom: 1px solid #ccc; }
.ptabs button { width: 18px; height: 11px; display: flex; align-items: center; justify-content: center; background: #cfcfd2; border-right: 1px solid #8e8e92; }
.ptabs .on { background: #fff; }
.ptabs svg { width: 9px; height: 9px; }
.ptitle { display: flex; align-items: center; padding: 3px 4px 0 0; }
.ptitle h1 { flex: 1; margin: 0; font: inherit; font-weight: 700; text-align: center; }
.ptitle svg { width: 7px; height: 7px; }
.confirm { display: flex; gap: 3px; padding: 2px 2px 0; }
.confirm svg { width: 7px; height: 7px; }
.confirm :deep(path) { stroke-width: 2; }
.body { padding: 35px 20px 0 9px; }
.modes { display: grid; grid-template-columns: 1fr 1fr; gap: 5px; padding-bottom: 4px; }
.mode { display: flex; align-items: center; height: 11px; border: 1px solid #b8b8bc; background: #e3e3e6; padding: 0 1px; }
.mode span { flex: 1; text-align: center; }
.mode svg { width: 8px; height: 8px; }
.mode.on { border-color: #3a86c4; box-shadow: inset 0 0 0 1px #a8cdea; }
.mode:disabled { background: #c9c9cc; color: #999; border-color: #c4c4c8; }
.sec { border-top: 1px solid #c0c0c4; display: flex; flex-direction: column; }
h2 { margin: 0; padding: 1px 2px 0; font: inherit; font-weight: 700; height: 10px; display: flex; justify-content: space-between; align-items: center; }
.chev { width: 4px; height: 5px; position: relative; }
.chev::before, .chev::after { content: ""; position: absolute; left: 1px; width: 2px; height: 2px; border: solid #777; border-width: 1px 0 0 1px; transform: rotate(45deg); }
.chev::before { top: 1px; } .chev::after { top: 3px; }
.chev.down { transform: rotate(180deg); }
.field { display: grid; grid-template-columns: 1fr 81px; gap: 3px; align-items: center; height: 12px; padding-right: 5px; }
.field label { text-align: right; white-space: nowrap; }
select { width: 100%; height: 9px; background: #dededf linear-gradient(#888, #888) no-repeat right 3px center / 3px 1px; border: 1px solid #bcbcc0; padding: 0 1px; line-height: 7px; }
select:disabled { background-color: #cbcbce; color: #8e8e92; opacity: 1; }
input[type="checkbox"] { width: 6px; height: 6px; border: 1px solid #555; background: #fff; }
input[type="checkbox"]:disabled { border-color: #ccc; }
.feature { height: 59px; }
.dir1 { height: 43px; gap: 1px; }
.dir2 { height: 18px; }
.prof { height: 64px; }
.taper { height: 51px; }
.row { display: grid; grid-template-columns: 15px 1fr; column-gap: 4px; align-items: center; padding: 0 5px; height: 11px; }
.row:has(input) { grid-template-columns: 15px 1fr 7px; column-gap: 4px; }
.row input { height: 10px; min-width: 0; background: #fff; border: 1px solid #9a9a9e; padding: 0 2px; }
.tool { width: 14px; height: 11px; background: #dcdcdf; border: 1px solid #bcbcc0; display: flex; align-items: center; justify-content: center; }
.tool svg { width: 9px; height: 9px; }
.flat { background: none; border-color: transparent; }
.tall { height: 17px; background: #e4e2e8; border-color: #e4e2e8; }
.tall svg { width: 14px; height: 15px; }
.spin { width: 6px; height: 9px; border: 1px solid #c6c6ca; background: linear-gradient(#777, #777) center 2px / 2px 1px no-repeat, linear-gradient(#777, #777) center 5px / 2px 1px no-repeat, #ededf0; }
.top { align-items: start; height: 15px; margin-top: 1px; }
.picked { height: 9px; background: #c5e1f7; color: #738ca0; padding: 0 2px; line-height: 9px; }
.tick { display: flex; align-items: center; gap: 2px; height: 9px; padding-left: 6px; color: #888; }
.tick u { text-decoration-color: #ddd; }
.wide { height: 10px; margin: 3px 5px 0 24px; background: #e0e0e3; border: 1px solid #b9b9bd; }
.wide:disabled { background: #cbcbce; color: #999; margin-top: 0; }
.taper .row { margin: 4px 0; }
.move .wide { margin-top: 2px; }
.handle { position: absolute; right: -4px; top: 187px; width: 4px; height: 16px; background: #f5f5f8; border: 1px solid #c3c3c7; z-index: 2; }
.handle::before { content: ""; display: block; width: 1px; height: 2px; background: #888; }

.view { position: relative; display: grid; min-width: 0; }
.model { width: 100%; height: 100%; overflow: hidden; }
.face { fill: #f1ffe3; }
.rim { fill: none; stroke: #2b3328; stroke-width: 1; }
.dash { stroke-dasharray: 3 1; stroke: #18231a; }
.wire { fill: none; stroke: #22ce3b; stroke-width: 1.200; }
.tip { fill: #12c92e; stroke: #12c92e; stroke-width: .5; }
.tiptext { font: 5px "Open Sans", sans-serif; fill: #777; }
.ax { font: 4px "DejaVu Sans", sans-serif; }
.iso { font: bold 5px "DejaVu Sans", sans-serif; fill: #222; }
.tree { position: absolute; left: 2px; top: 3px; display: flex; align-items: center; gap: 3px; }
.tree svg { width: 8px; height: 8px; }
.tree .tri { border: 1px solid transparent; border-left: 2px solid #444; margin-right: 1px; }
.hud { position: absolute; left: 271px; top: -7px; display: flex; gap: 2px; }
.hud .drop { margin-right: 7px; }
.hud .drop::after { right: -5px; }
.hud svg { width: 8px; height: 8px; }
.docwin { position: absolute; right: 4px; top: -7px; display: flex; gap: 3px; }
.docwin svg { width: 6px; height: 6px; opacity: .8; }
.corner { position: absolute; opacity: .3; }
.corner svg { width: 11px; height: 10px; }
.corner :deep(path) { stroke-width: 3; }
.yes { right: 34px; top: 6px; } .no { right: 16px; top: 19px; }
.task { position: absolute; right: 1px; top: 13px; display: flex; flex-direction: column; border: 1px solid #a6a6aa; background: #cfcfd3; }
.task button { width: 10px; height: 10px; border-bottom: 1px solid #aaa; display: flex; align-items: center; justify-content: center; }
.task .on { background: #fff; }
.task svg { width: 8px; height: 8px; }
.cam { position: absolute; right: 14px; bottom: -5px; z-index: 2; display: flex; align-items: center; gap: 2px; font-size: 8px; line-height: 10px; color: #444; }
.cam b { color: #3782bd; font-weight: 600; }
.cam svg { width: 8px; height: 8px; }

footer { background: #f0f0f2; }
.sheets { display: flex; height: 8px; border-top: 1px solid #aaa; background: #f7f7f9; }
.sheets .nav { width: 30px; background: #a9a9ad; color: #777; font-size: 4px; line-height: 7px; text-align: center; }
.sheets button { padding: 0 6px; border-right: 1px solid #aaa; background: #d8d8db; line-height: 7px; }
.sheets button + button { padding: 0 5px 0 3px; }
.sheets .on { background: #fff; font-weight: 700; }
.status { display: flex; align-items: center; height: 9px; border-top: 1px solid #bbb; padding: 0 2px 0 1px; line-height: 8px; }
.ver { flex: 1; }
.edit { width: 52px; }
.unit { width: 24px; color: #b5b5b9; }
.status .caret { margin-right: 30px; }
.status svg { width: 7px; height: 7px; }
</style>
